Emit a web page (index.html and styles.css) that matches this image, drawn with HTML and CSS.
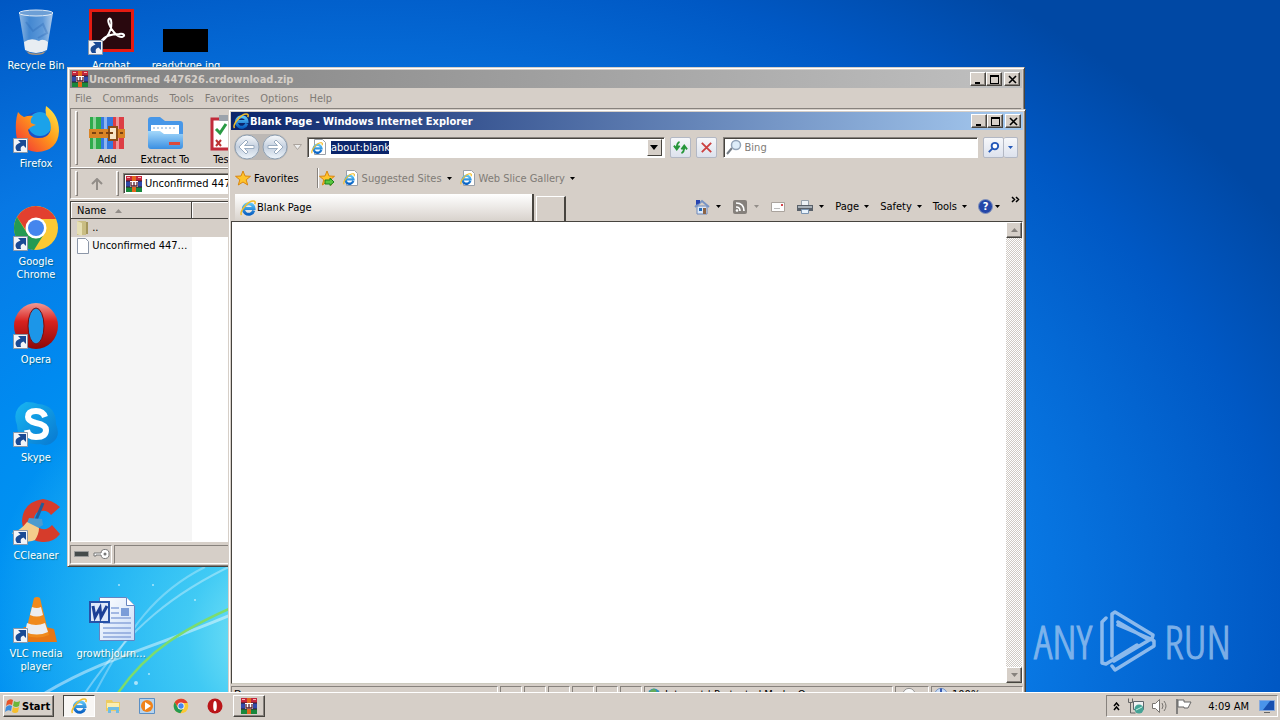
FILE: index.html
```html
<!DOCTYPE html>
<html lang="en">
<head>
<meta charset="utf-8">
<title>Desktop</title>
<link rel="stylesheet" href="styles.css">
</head>
<body>
<svg class="defs" aria-hidden="true">
  <linearGradient id="g-ie" x1="0" y1="0" x2="0" y2="1"><stop offset="0" stop-color="#5cc4f6"/><stop offset="1" stop-color="#0a62c4"/></linearGradient>
  <linearGradient id="g-glass" x1="0" y1="0" x2="1" y2="0"><stop offset="0" stop-color="#a8c8e8"/><stop offset=".3" stop-color="#4f8fd2"/><stop offset=".7" stop-color="#6fa4dc"/><stop offset="1" stop-color="#cfe0f2"/></linearGradient>
  <linearGradient id="g-opera" x1="0" y1="0" x2="0" y2="1"><stop offset="0" stop-color="#f39a94"/><stop offset=".4" stop-color="#d8221f"/><stop offset="1" stop-color="#8c0808"/></linearGradient>
  <linearGradient id="g-fox" x1="1" y1="0" x2="0" y2="1"><stop offset="0" stop-color="#fff04a"/><stop offset=".45" stop-color="#ff9a1a"/><stop offset="1" stop-color="#f0253c"/></linearGradient>
  <linearGradient id="g-nav" x1="0" y1="0" x2="0" y2="1"><stop offset="0" stop-color="#f8fafc"/><stop offset=".5" stop-color="#c4d0df"/><stop offset="1" stop-color="#eef5fb"/></linearGradient>
  <linearGradient id="g-skype" x1="0" y1="0" x2="1" y2="1"><stop offset="0" stop-color="#18b6f2"/><stop offset="1" stop-color="#0878d0"/></linearGradient>
  <linearGradient id="g-folder" x1="0" y1="0" x2="0" y2="1"><stop offset="0" stop-color="#a4d8fa"/><stop offset="1" stop-color="#3a8fe2"/></linearGradient>
  <linearGradient id="g-page" x1="0" y1="0" x2="1" y2="1"><stop offset="0" stop-color="#fff"/><stop offset="1" stop-color="#c8dcf8"/></linearGradient>
  <symbol id="link" viewBox="0 0 15 15"><path fill="#f2f4f8" stroke="#8c98a8" d="M.5.5h14v14H.5z"/><path fill="#1a4a94" d="M5 2h8v8l-2.500-2.500C8 8 7 10 8 13H4C1 9 3 6 7.500 4.500z"/></symbol>
  <symbol id="caret" viewBox="0 0 5 3"><path d="M0 0h5L2.500 3z"/></symbol>
  <symbol id="rar" viewBox="0 0 16 16"><path fill="#c4263c" d="M0 0h16v5H0z"/><path fill="#3048a8" d="M0 5h16v6H0z"/><path fill="#18883c" d="M0 11h16v5H0z"/><path stroke="#301828" d="M0 5h16M0 11h16"/><path fill="#e2681c" d="M6 0h4v16H6z"/><path fill="#fff" d="M4 5h8v6H4z"/><path fill="none" stroke="#5a2030" stroke-width="1.300" d="M5 6v4h6V6M8 6v4"/><path fill="#f6b4b4" d="M1 1h3v1H1zM12 1h3v1h-3z"/></symbol>
  <symbol id="ie" viewBox="0 0 16 16"><path fill="none" stroke="url(#g-ie)" stroke-width="3" d="M13.800 10.500A5.300 5.300 0 1 1 14 8.600H5"/><path fill="none" stroke="#f4bd28" stroke-width="1.500" d="M1.500 15C-.8 12 8-.2 14.500 1.200c1 .4.8 1.800.2 3"/></symbol>
  <symbol id="iepage" viewBox="0 0 16 16"><path fill="#fff" stroke="#9aa0a8" d="M3.500.5h8l3 3v12h-11z"/><svg y="3" width="12" height="12"><use href="#ie"/></svg></symbol>
  <symbol id="chrome" viewBox="0 0 48 48"><circle cx="24" cy="24" r="22" fill="#fbc934"/><path fill="#e2402f" d="M5 13a22 22 0 0 1 39 2H24a10 10 0 0 0-9.500 12z"/><path fill="#249a53" d="M5 13a22 22 0 0 0 17 33l10-16a10 10 0 0 1-17-1z"/><circle cx="24" cy="24" r="10.500" fill="#fff"/><circle cx="24" cy="24" r="8" fill="#4586ee"/></symbol>
  <symbol id="opera" viewBox="0 0 48 48"><ellipse cx="24" cy="24" rx="22" ry="23" fill="url(#g-opera)"/><ellipse cx="24" cy="24" rx="8" ry="18" fill="#1c96e8" stroke="#7a0d0d"/></symbol>
  <symbol id="star" viewBox="0 0 16 16"><path fill="#ffc42c" stroke="#d98610" d="m8 1 2 5 5.500.3-4.300 3.500 1.500 5.200L8 12l-4.700 3 1.500-5.200L.5 6.300 6 6z"/></symbol>
  <symbol id="min" viewBox="0 0 9 9"><path d="M1 7h5v2H1z"/></symbol>
  <symbol id="max" viewBox="0 0 9 9"><path d="M0 0h9v9H0zM1 2v6h7V2z" fill-rule="evenodd"/></symbol>
  <symbol id="close" viewBox="0 0 9 9"><path fill="none" stroke="#000" stroke-width="1.600" d="m1 1 7 7M8 1 1 8"/></symbol>
</svg>

<main class="desktop">
  <svg class="wallpaper" preserveAspectRatio="xMinYMax slice" viewBox="0 0 260 130" aria-hidden="true">
    <g fill="none" stroke="#fff">
      <path stroke-opacity=".45" stroke-width="3" d="M45 131C110 92 170 82 260 40"/>
      <path stroke-opacity=".35" stroke-width="2" d="M85 131C130 65 175 30 235 2"/>
      <path stroke-opacity=".3" stroke-width="2" d="M95 131C130 65 155 30 205 5"/>
      <path stroke="#7ddc6c" stroke-width="2.500" d="M118 131C145 92 180 65 260 34"/>
    </g>
    <g fill="#fff" fill-opacity=".6"><circle cx="119" cy="23" r="1"/><circle cx="153" cy="23" r="1"/><circle cx="136" cy="121" r="2"/><circle cx="149" cy="112" r="1"/><circle cx="195" cy="38" r="1"/></g>
  </svg>

  <nav class="icons" aria-label="Desktop icons">
    <a class="icon r1 c1" href="#bin"><svg viewBox="0 0 48 48"><path fill="url(#g-glass)" fill-opacity=".85" d="m7 5 6 36q11 7 22 0l6-36z"/><path fill="none" stroke="#2b66b4" stroke-opacity=".35" stroke-width="2" d="m14 14 7 9 10-7 4 9-9 5"/><path fill="#e8edf2" d="m12 34 1 8q11 6 22 0l1-8q-5-4-9-1-8-4-15 1z"/><path fill="#a8927a" d="M14 43q10 5 20 0l-3 3q-7 2-14 0z"/><ellipse cx="24" cy="5" rx="17" ry="3" fill="#6d9fd6" stroke="#dfeaf6"/></svg>Recycle Bin</a>
    <a class="icon r2 c1" href="#firefox"><svg viewBox="0 0 48 48"><circle cx="26" cy="24" r="18" fill="#1c50c4"/><circle cx="28" cy="18" r="12" fill="#1ba2ea"/><path fill="url(#g-fox)" d="M6 6q2 3 6 5 5-2 9-1-3 3-2 7l5 2q-5 1-8 5 2 9 11 8 8 0 11-6 3-9-4-17-1-5 0-9Q47 9 47 25q-1 20-22 21Q5 44 4 27 3 15 6 6z"/></svg><svg class="link"><use href="#link"/></svg>Firefox</a>
    <a class="icon r3 c1" href="#chrome"><svg><use href="#chrome"/></svg><svg class="link"><use href="#link"/></svg>Google Chrome</a>
    <a class="icon r4 c1" href="#opera"><svg><use href="#opera"/></svg><svg class="link"><use href="#link"/></svg>Opera</a>
    <a class="icon r5 c1" href="#skype"><svg viewBox="0 0 48 48"><path fill="url(#g-skype)" d="M14 2q8 0 12 2 18 1 18 20 5 12-3 18-5 5-13 2Q6 46 5 25-1 9 14 2z"/><path fill="none" stroke="#fff" stroke-width="6" d="M33 17q-2-6-9-6-8 0-8 6 0 4 8 6 10 2 10 7 0 7-10 7-8 0-9-7"/></svg><svg class="link"><use href="#link"/></svg>Skype</a>
    <a class="icon r6 c1" href="#ccleaner"><svg viewBox="0 0 48 48"><path fill="#d63c2b" d="M48 9Q40 2 31 1 11 4 10 23q1 19 20 21 11 1 18-8l-8-9q-4 5-10 4-9-2-8-10 1-8 8-8 5-1 9 4z"/><path stroke="#255c96" stroke-width="3" d="M31 5 24 22"/><path fill="#4b9bd0" d="m17 20 13 1 1 6-5 3-11-5z"/><path fill="#f4cd8c" d="M15 24Q9 32 0 35l8 9q10 0 15-2 4-6 4-12z"/></svg><svg class="link"><use href="#link"/></svg>CCleaner</a>
    <a class="icon r7 c1" href="#vlc"><svg viewBox="0 0 48 48"><path fill="#e77714" d="M12 31 4 44l3 2h38l-3-13-8-2z"/><path fill="#f08a1c" d="m22 2-9 37q12 5 24 0L28 2q-3-2-6 0z"/><path fill="#ecedf0" d="m20 11-2 8q7 3 13 0l-2-8q-4 2-9 0zM15 27l-2 9q12 5 23 0l-3-9q-9 4-18 0z"/></svg><svg class="link"><use href="#link"/></svg>VLC media player</a>
    <a class="icon r1 c2" href="#acrobat"><svg viewBox="0 0 48 48"><path fill="#e51b12" d="M2 1h45v43H2z"/><path fill="#29080e" d="M5 4h39v37H5z"/><path fill="none" stroke="#fff" stroke-width="2" d="M12 34c8-2 14-13 12-22-1-3-4-1-2 4 2 6 8 13 13 13 4-1 2-4-3-3-8 0-15 3-18 7"/></svg><svg class="link"><use href="#link"/></svg>Acrobat</a>
    <a class="icon r7 c2" href="#growth"><svg viewBox="0 0 48 48"><path fill="url(#g-page)" stroke="#6684c0" d="M12.500 1.500h27l8 8v35h-35z"/><path fill="#fff" stroke="#6684c0" d="M39.500 1.500v8h8"/><path stroke="#8ba5da" stroke-width="1.500" d="M24 12h8M24 17h8M24 22h20M16 27h28M16 32h28M16 37h28M16 41h28"/><path fill="#7b9dd8" d="M34 12h8v8h-8z"/><path fill="#dfe8fa" stroke="#2752a8" stroke-width="2" d="M3 6h19v20H3z"/><path fill="none" stroke="#1c3f96" stroke-width="3" d="m6 10 2 11 5-9 1 9 6-11"/></svg>growthjourn...</a>
    <a class="icon r1 c3" href="#ready"><svg viewBox="0 0 48 48"><path d="M1 21h45v23H1z"/></svg>readytype.jpg</a>
  </nav>

  <section class="window rar-window" aria-label="WinRAR">
    <header class="title inactive"><svg class="i16"><use href="#rar"/></svg><h1>Unconfirmed 447626.crdownload.zip</h1>
      <div class="controls"><button aria-label="Minimize"><svg><use href="#min"/></svg></button><button aria-label="Maximize"><svg><use href="#max"/></svg></button><button aria-label="Close"><svg><use href="#close"/></svg></button></div></header>
    <nav class="menu"><button>File</button><button>Commands</button><button>Tools</button><button>Favorites</button><button>Options</button><button>Help</button></nav>
    <div class="rar-tools">
      <i class="grip"></i>
      <button><svg viewBox="0 0 36 36"><path fill="#2fab4b" d="M1 2h11v32H1z"/><path fill="#3479e0" d="M12 2h12v32H12z"/><path fill="#dd3e45" d="M24 2h11v32H24z"/><path fill="#fff" fill-opacity=".45" d="M4 2h3v32H4zM15 2h3v32h-3zM27 2h3v32h-3z"/><path fill="#d98425" d="M0 14h36v9H0z"/><path fill="#f8e6c8" stroke="#8c4e16" stroke-width="2" d="M20 12h8v13h-8z"/><path stroke="#7a4212" stroke-width="2" d="M3 18h4M10 18h4M17 18h7M31 18h3"/></svg>Add</button>
      <button><svg viewBox="0 0 36 36"><path fill="#4797e8" d="M1 5q0-3 3-3h9l5 4h15q3 0 3 3v12H1z"/><path fill="#fff" d="M4 10h28v12H4z"/><path stroke="#7aa8d8" stroke-dasharray="2" d="M6 13h24"/><path fill="url(#g-folder)" d="M1 16h12l4 3h19v12q0 3-3 3H4q-3 0-3-3z"/><path fill="#db493c" d="M22 27h11v3H22z"/></svg>Extract To</button>
      <button><svg viewBox="0 0 36 36"><path fill="#fff" stroke="#c12b3a" stroke-width="3" d="M7 4h28v30H7z"/><path fill="#9ba3ac" d="M14 0h12v6H14z"/><path fill="none" stroke="#2a9a44" stroke-width="3" d="m11 14 4 4 6-9"/><path stroke="#b33" stroke-width="2" d="m11 25 5 6m0-6-5 6"/></svg>Test</button>
    </div>
    <div class="rar-path">
      <i class="grip"></i><button class="up" aria-label="Up"><svg viewBox="0 0 12 12"><path fill="none" stroke="#928d88" stroke-width="2" d="M6 12V2M1 6l5-5 5 5"/></svg></button><i class="grip"></i>
      <label class="field"><svg class="i16"><use href="#rar"/></svg><input aria-label="Path" value="Unconfirmed 447626.crdownload.zip"></label>
    </div>
    <div class="files">
      <table><thead><tr><th>Name <svg class="sort" viewBox="0 0 7 4"><path fill="#928d88" d="M0 4h7L3.500 0z"/></svg></th><th></th></tr></thead>
      <tbody><tr class="picked"><td><svg class="i16" viewBox="0 0 16 16"><path fill="#c9bd83" d="M2 1h9v14H2z"/><path fill="#e6dfb4" d="m2 1 5 2v13l-5-2z"/><path fill="#a4965c" d="M11 2h2v12h-2z"/></svg> ..</td><td></td></tr>
      <tr><td><svg class="i16" viewBox="0 0 16 16"><path fill="#fff" stroke="#8c97a8" d="M2.500.5h8l3 3v12h-11z"/></svg> Unconfirmed 447…</td><td></td></tr></tbody></table>
    </div>
    <footer class="rar-status"><span class="keys"><svg viewBox="0 0 36 12"><path fill="#454b4b" stroke="#999" d="M.5 3.500h14v5H.5z"/><path fill="#fff" stroke="#777" d="M35 6a4 4 0 1 0-8-1h-7v3h2V7h5a4 4 0 0 0 8-1z"/><circle cx="31" cy="6" r="1.500" fill="#777"/></svg></span><span class="grow"></span></footer>
  </section>

  <section class="window ie-window" aria-label="Internet Explorer">
    <header class="title"><svg class="i16"><use href="#ie"/></svg><h1>Blank Page - Windows Internet Explorer</h1>
      <div class="controls"><button aria-label="Minimize"><svg><use href="#min"/></svg></button><button aria-label="Maximize"><svg><use href="#max"/></svg></button><button aria-label="Close"><svg><use href="#close"/></svg></button></div></header>
    <div class="nav">
      <div class="travel">
        <button aria-label="Back"><svg viewBox="0 0 26 26"><circle cx="13" cy="13" r="12" fill="url(#g-nav)" stroke="#8fa0b2"/><path fill="#fff" stroke="#9aacc0" d="m5 13 7-7 2 2-3.500 3.500H20v3h-9.500L14 18l-2 2z"/></svg></button>
        <button aria-label="Forward"><svg viewBox="0 0 26 26"><circle cx="13" cy="13" r="12" fill="url(#g-nav)" stroke="#8fa0b2"/><path fill="#fff" stroke="#9aacc0" d="m21 13-7-7-2 2 3.500 3.500H6v3h9.500L12 18l2 2z"/></svg></button>
      </div>
      <button class="recent" aria-label="Recent pages"><svg viewBox="0 0 9 6"><path fill="#eee" stroke="#aaa39d" d="M.5.500h8l-4 5z"/></svg></button>
      <div class="field address"><svg class="i16"><use href="#iepage"/></svg><input aria-label="Address" value="about:blank"><button class="drop" aria-label="Show addresses"><svg class="caret big"><use href="#caret"/></svg></button></div>
      <button class="soft" aria-label="Refresh"><svg viewBox="0 0 16 16"><path fill="none" stroke="#26963a" stroke-width="2" d="M7 2Q4 3 4 9M1 6l3 4 3-4M9 14q3-1 3-7M9 10l3-4 3 4"/></svg></button>
      <button class="soft" aria-label="Stop"><svg viewBox="0 0 16 16"><path stroke="#cc4140" stroke-width="2" d="m3 3 10 10M13 3 3 13"/></svg></button>
      <label class="field search"><svg class="i16" viewBox="0 0 16 16"><path stroke="#777f88" stroke-width="2" d="m1 15 5-6"/><circle cx="10" cy="6" r="4.500" fill="#deedf9" stroke="#93a4b8" stroke-width="1.500"/></svg><input aria-label="Search" placeholder="Bing"></label>
      <div class="split"><button class="soft" aria-label="Search"><svg viewBox="0 0 16 16"><path stroke="#2458b8" stroke-width="2" d="m3 13 4-4"/><circle cx="9.500" cy="6.500" r="3.500" fill="#fff" stroke="#2458b8" stroke-width="2"/></svg></button><button class="soft slim" aria-label="Search options"><svg class="caret blue"><use href="#caret"/></svg></button></div>
    </div>
    <div class="favs">
      <button class="dark"><svg class="i16"><use href="#star"/></svg>Favorites</button><i class="rule"></i>
      <button aria-label="Add to favorites"><svg class="i16" viewBox="0 0 16 16"><use href="#star" width="16" height="16"/><path fill="#58c640" stroke="#1e801c" d="M6 10h5V8l4 4-4 3.500V14H6z"/></svg></button>
      <button class="site"><svg class="i16"><use href="#iepage"/></svg>Suggested Sites<svg class="caret"><use href="#caret"/></svg></button>
      <button class="site"><svg class="i16"><use href="#iepage"/></svg>Web Slice Gallery<svg class="caret"><use href="#caret"/></svg></button>
    </div>
    <div class="tabs">
      <button class="tab"><svg class="i16"><use href="#ie"/></svg>Blank Page</button><button class="newtab" aria-label="New tab"></button>
      <div class="commands">
        <button aria-label="Home"><svg class="i16" viewBox="0 0 16 16"><path fill="#dce8f8" stroke="#6e88b8" d="M3 7h10v8H3z"/><path fill="none" stroke="#7894c4" stroke-width="2" d="m1 8 7-6 7 6"/><path fill="#2744b0" d="M2 1h4v3L2 6z"/><path fill="#276db8" d="M5 9h3v3H5z"/><path fill="#8d6445" d="M9 9h3v6H9z"/></svg><svg class="caret"><use href="#caret"/></svg></button>
        <button aria-label="Feeds"><svg class="i16" viewBox="0 0 16 16"><rect x="1" y="1" width="14" height="14" rx="2" fill="#85807b"/><path fill="none" stroke="#fff" stroke-width="1.700" d="M4 4q8 0 8 8M4 8q4 0 4 4"/><circle cx="5" cy="11.500" r="1.300" fill="#fff"/></svg><svg class="caret faint"><use href="#caret"/></svg></button>
        <button aria-label="Mail"><svg class="i16" viewBox="0 0 16 16"><path fill="#fdfdfd" stroke="#aaa39d" d="M1.500 3.500h13v9h-13z"/><path fill="#d3454c" d="M11 5h2v2h-2z"/><path stroke="#bbb" d="M4 9.500h6"/></svg></button>
        <button aria-label="Print"><svg class="i16" viewBox="0 0 16 16"><path fill="#eef2f6" stroke="#98a2ac" d="M4.500 1.500h7v5h-7z"/><path fill="#596069" d="M0 6h16v6H0z"/><path fill="#a9b1b8" d="M1 7h14v2H1z"/><path fill="#e7f2fc" stroke="#7b94b0" d="M4.500 10.500h7v4h-7z"/></svg><svg class="caret"><use href="#caret"/></svg></button>
        <button>Page<svg class="caret"><use href="#caret"/></svg></button><button>Safety<svg class="caret"><use href="#caret"/></svg></button><button>Tools<svg class="caret"><use href="#caret"/></svg></button>
        <button class="help"><span>?</span><svg class="caret"><use href="#caret"/></svg></button>
        <button class="more" aria-label="More"><svg viewBox="0 0 9 7"><path fill="none" stroke="#000" stroke-width="1.500" d="m1 1 2.500 2.500L1 6M5 1l2.500 2.500L5 6"/></svg></button>
      </div>
    </div>
    <div class="view"><div class="page"></div><div class="scroll"><button aria-label="Scroll up"><svg viewBox="0 0 7 4"><path d="M0 4h7L3.500 0z"/></svg></button><button aria-label="Scroll down"><svg viewBox="0 0 7 4"><path d="M0 0h7L3.500 4z"/></svg></button></div></div>
    <footer class="ie-status"><span class="grow">Done</span><span class="cell"></span><span class="cell"></span><span class="cell"></span><span class="cell"></span><span class="cell"></span><span class="cell"></span><span class="zone"><svg viewBox="0 0 16 16"><circle cx="8" cy="8" r="7" fill="#2f91bf"/><path fill="#65ab5a" d="m3 4 5-3 3 3-3 5-4-1z"/></svg>Internet | Protected Mode: On</span><span class="lock"><svg viewBox="0 0 16 16"><circle cx="8" cy="8" r="7" fill="#fafafa" stroke="#888"/></svg></span><span class="zoom"><svg viewBox="0 0 16 16"><circle cx="8" cy="8" r="7" fill="#c9dcf6" stroke="#6c8bc0"/><path stroke="#2449a8" stroke-width="2" d="M8 1v12"/></svg>100%</span></footer>
  </section>

  <div class="watermark"><span>ANY</span><svg viewBox="0 0 56 62" aria-hidden="true"><path fill="none" stroke="#b8d4f4" stroke-width="3.500" stroke-linejoin="round" stroke-linecap="round" d="M6 8 2 12v41l4 1 31-19M12 46V4l3-2 38 23-1 4-3 1-31-18M12 56l3 4 39-24v-5l-3-2-37 22M18 15l33 14"/></svg><span>RUN</span></div>
</main>

<footer class="taskbar">
  <button class="start"><svg class="i16" viewBox="0 0 16 16"><path fill="#e6542a" d="M2 3q3-3 6-1L7 7Q4 5 1 8z"/><path fill="#6cb63a" d="M9 3q3 2 6 0l-1 5q-3 2-6 0z"/><path fill="#3b8dde" d="M1 9q3-3 6-1l-1 5q-3-2-6 1z"/><path fill="#f6be2c" d="M8 9q3 2 6 0l-1 5q-3 2-6 0z"/></svg>Start</button>
  <nav class="quick" aria-label="Applications">
    <button class="on" aria-label="Internet Explorer"><svg><use href="#ie"/></svg></button>
    <button aria-label="Explorer"><svg viewBox="0 0 16 16"><path fill="#edcc62" d="M1 2h6l1 2h7v9H1z"/><path fill="#fbeeb0" d="M2 5h12v5H2z"/><path fill="#70bde4" d="M3 9h11v6h-3v-3H6v3H3z"/></svg></button>
    <button aria-label="Media Player"><svg viewBox="0 0 16 16"><path fill="#b7d4ee" stroke="#5b8fc4" d="M.5.500h15v15H.5z"/><circle cx="8" cy="8" r="6" fill="#f0831a"/><path fill="#fff" d="m6 4 6 4-6 4z"/></svg></button>
    <button aria-label="Chrome"><svg><use href="#chrome"/></svg></button>
    <button aria-label="Opera"><svg viewBox="0 0 16 16"><circle cx="8" cy="8" r="7.500" fill="#ba1518"/><ellipse cx="8" cy="8" rx="1.800" ry="5" fill="#fff"/></svg></button>
    <button class="raised" aria-label="WinRAR"><svg><use href="#rar"/></svg></button>
  </nav>
  <div class="tray">
    <button class="chev" aria-label="Show hidden icons"><svg viewBox="0 0 7 9"><path fill="none" stroke="#000" stroke-width="1.500" d="m1 4 2.500-3L6 4M1 8l2.500-3L6 8"/></svg></button>
    <svg class="i16" viewBox="0 0 16 16"><path fill="#f0f2f4" stroke="#60666c" d="M5.500 3.500h10v8h-10z"/><path fill="none" stroke="#666" d="M.5.500v4h4v-4M2.500 5v10h5"/><circle cx="11" cy="11" r="4.500" fill="#45a396"/><path stroke="#c8f0e4" d="m8 12 6-3"/></svg>
    <svg class="i16" viewBox="0 0 16 16"><path fill="#fff" stroke="#77736f" d="M.5 5.500h3l4-4v13l-4-4h-3z"/><path fill="none" stroke="#77736f" d="M10 5q2 3 0 6M12 3q4 5 0 10"/></svg>
    <svg class="i16" viewBox="0 0 16 16"><path stroke="#666" stroke-width="1.500" d="M1 1v15"/><path fill="#fff" stroke="#666" d="M2 2h6v2h7l-3 6H8V9H2z"/></svg>
    <time>4:09 AM</time>
    <button class="show" aria-label="Show desktop"><svg viewBox="0 0 16 16"><path fill="#1750b0" stroke="#88aadd" d="M.5 2.500h15v10H.5z"/><path fill="#4a94ea" d="M1 3h10L4 12H1z"/><path fill="#666" d="M5 14h6v1H5z"/></svg></button>
  </div>
</footer>
</body>
</html>
```
FILE: styles.css
```css
:root { --face: #d6cfc8; --hi: #fff; --shade: #87827d; --dark: #47443f; }
* { box-sizing: border-box; }
body { margin: 0; height: 100vh; display: flex; flex-direction: column; overflow: hidden; font: 11px/13px "DejaVu Sans Condensed", "DejaVu Sans", sans-serif; color: #000; }
button, input { font: inherit; color: inherit; padding: 0; border: 0; background: none; border-radius: 0; outline: 0; }
button { display: flex; align-items: center; white-space: nowrap; }
svg { display: block; flex: none; }
.defs { position: absolute; width: 0; height: 0; }
.i16 { width: 16px; height: 16px; }
.caret { width: 5px; height: 3px; margin-left: 5px; }
.caret.big { width: 8px; height: 5px; margin: 0; }
.caret.blue { fill: #2458b8; margin: 0; }
.caret.faint { fill: #928d88; }
.grow { flex: 1; }

.desktop { flex: 1; min-height: 0; position: relative; overflow: hidden; background: radial-gradient(circle at 22% 92%, #8ceaf4 0, #50d4f4cc 8%, #18b8f800 25%), radial-gradient(ellipse 84% 110% at 28% 88%, #08b0f8 0, #009cf4 22%, #008af0 42%, #0878e4 62%, #0058c4 86%, #0048a4 100%); }
.wallpaper { position: absolute; left: 0; bottom: 0; width: 260px; height: 130px; }

.icons { position: relative; display: grid; grid-template-columns: repeat(3, 72px); column-gap: 3px; grid-template-rows: repeat(7, 98px); padding-top: 8px; }
.icon { position: relative; display: flex; flex-direction: column; align-items: center; text-align: center; color: #fff; text-decoration: none; text-shadow: 1px 1px 1px #0548; }
.icon svg { width: 48px; height: 48px; margin-bottom: 3px; }
.icon svg.link { position: absolute; left: 13px; top: 32px; width: 15px; height: 15px; }
.r1 { grid-row: 1; } .r2 { grid-row: 2; } .r3 { grid-row: 3; } .r4 { grid-row: 4; } .r5 { grid-row: 5; } .r6 { grid-row: 6; } .r7 { grid-row: 7; }
.c1 { grid-column: 1; } .c2 { grid-column: 2; } .c3 { grid-column: 3; }

.window { position: absolute; display: flex; flex-direction: column; padding: 2px; background: var(--face); border: 1px solid; border-color: var(--face) var(--dark) var(--dark) var(--face); box-shadow: inset 1px 1px var(--hi), inset -1px -1px var(--shade); }
.rar-window { left: 67px; top: 67px; width: 958px; height: 500px; }
.ie-window { left: 228px; top: 109px; width: 798px; height: 597px; }
.title { display: flex; align-items: center; gap: 1px; height: 18px; padding: 0 2px; color: #fff; background: linear-gradient(90deg, #0a246a, #a6caf0); }
.title.inactive { color: #d6cfc8; background: linear-gradient(90deg, #808080, #c0c0c0); }
.title h1 { flex: 1; margin: 0; font-size: 11px; line-height: 13px; font-weight: bold; }
.controls { display: flex; }
.controls button { width: 16px; height: 14px; justify-content: center; background: var(--face); border: 1px solid; border-color: var(--hi) var(--dark) var(--dark) var(--hi); box-shadow: inset -1px -1px var(--shade); }
.controls button:last-child { margin-left: 2px; }
.controls svg { width: 9px; height: 9px; }

.menu { display: flex; gap: 11px; height: 20px; padding-left: 5px; color: #807b76; }
.grip { width: 3px; align-self: stretch; border: 1px solid; border-color: var(--hi) var(--shade) var(--shade) var(--hi); }
.rar-tools, .rar-path { display: flex; border: 1px solid; border-color: var(--shade) var(--hi) var(--hi) var(--shade); padding: 2px 4px; }
.rar-tools { height: 60px; }
.rar-tools button { flex-direction: column; width: 58px; gap: 2px; padding-top: 4px; }
.rar-tools svg { width: 36px; height: 36px; }
.rar-path { height: 31px; align-items: center; }
.up { width: 38px; justify-content: center; }
.up svg { width: 12px; height: 12px; }
.field { display: flex; align-items: center; gap: 3px; background: #fff; border: 1px solid; border-color: var(--shade) var(--hi) var(--hi) var(--shade); box-shadow: inset 1px 1px var(--dark); padding: 2px; }
.rar-path .field { flex: 1; height: 21px; margin-left: 4px; }
.field input { flex: 1; min-width: 0; }
.files { flex: 1; margin-top: 2px; border: 1px solid; border-color: var(--dark) var(--hi) var(--hi) var(--dark); background: linear-gradient(90deg, #f5f5f5 121px, #fff 121px); }
.files table { width: 100%; table-layout: fixed; border-collapse: separate; border-spacing: 0; }
.files th { height: 17px; padding: 0 6px; text-align: left; font-weight: normal; background: var(--face); border-right: 1px solid var(--dark); border-bottom: 1px solid var(--dark); box-shadow: inset 1px 1px var(--hi); }
.files th:first-child { width: 121px; }
.sort { display: inline-block; width: 7px; height: 4px; margin-left: 6px; vertical-align: middle; }
.files td { height: 18px; padding: 0 0 0 4px; white-space: nowrap; }
.files td svg { display: inline-block; vertical-align: middle; margin-right: -2px; }
.files .picked { background: var(--face); }
.rar-status { display: flex; gap: 2px; height: 22px; padding-top: 3px; }
.rar-status span { border: 1px solid; border-color: var(--shade) var(--hi) var(--hi) var(--shade); }
.rar-status .keys { width: 42px; padding: 2px 3px; }
.rar-status svg { width: 36px; height: 12px; }

.nav { display: flex; align-items: center; height: 34px; padding: 0 5px 0 3px; }
.travel { display: flex; gap: 2px; border-radius: 13px; background: #bcb8b5; }
.travel svg { width: 26px; height: 26px; }
.recent { width: 19px; justify-content: center; }
.recent svg { width: 9px; height: 6px; }
.nav .field { height: 21px; }
.address { flex: 357; padding: 2px 2px 2px 3px; }
.nav .address input { flex: none; width: 58px; height: 13px; color: #fff; background: #0a246a; margin-left: 1px; }
.drop { width: 15px; height: 17px; margin-left: auto; justify-content: center; background: var(--face); border: 1px solid; border-color: var(--hi) var(--dark) var(--dark) var(--hi); }
.search { flex: 254; margin-left: 6px; }
.search input::placeholder { color: #807b76; opacity: 1; }
.soft { width: 21px; height: 21px; margin-left: 5px; justify-content: center; border: 1px solid #b3b8c4; border-radius: 2px; background: linear-gradient(#f6f7fa, #dde2ed); }
.soft svg:not(.caret) { width: 15px; height: 15px; }
.split { display: flex; }
.split .slim { width: 14px; margin-left: 0; border-left: 0; }
.favs { display: flex; align-items: center; height: 28px; padding-left: 4px; color: #807b76; }
.favs button { gap: 3px; }
.favs .dark { color: #000; }
.rule { width: 2px; height: 20px; margin: 0 0 0 18px; border-left: 1px solid var(--shade); border-right: 1px solid var(--hi); }
.site { margin-left: 8px; }
.site .caret { margin-left: 2px; }
.tabs { display: flex; align-items: flex-end; height: 29px; padding-left: 4px; }
.tab { flex: 0 1 299px; height: 27px; padding-left: 5px; gap: 1px; border-right: 2px solid var(--dark); background: linear-gradient(#fff, #d8d2cc); }
.newtab { width: 30px; height: 25px; margin-left: 2px; border: 1px solid var(--hi); border-right: 2px solid var(--dark); border-bottom: 0; }
.commands { display: flex; align-items: center; gap: 11px; height: 29px; margin-left: auto; padding-right: 3px; }
.commands .i16 + .caret { margin-left: 6px; }
.help span { width: 15px; height: 15px; border-radius: 50%; background: #2446a8; border: 1px solid #8494bc; color: #fff; font-weight: bold; }
.help .caret { margin-left: 2px; }
.more { align-self: flex-start; }
.more svg { width: 9px; height: 7px; margin-top: 4px; }
.view { flex: 1; display: flex; background: #fff; border: 1px solid; border-color: var(--dark) var(--hi) #cbc9bd var(--dark); }
.page { flex: 1; }
.scroll { width: 16px; display: flex; flex-direction: column; justify-content: space-between; background: repeating-conic-gradient(#d0cac4 0 25%, #fff 0 50%) 0 0 / 2px 2px; }
.scroll button { width: 16px; height: 16px; justify-content: center; background: var(--face); border: 1px solid; border-color: var(--hi) var(--dark) var(--dark) var(--hi); box-shadow: inset -1px -1px var(--shade); }
.scroll svg { width: 7px; height: 4px; fill: #87827d; }
.ie-status { display: flex; gap: 2px; height: 19px; padding-top: 2px; }
.ie-status span { display: flex; align-items: center; gap: 4px; padding-left: 2px; border: 1px solid; border-color: var(--shade) var(--hi) var(--hi) var(--shade); }
.ie-status svg { width: 14px; height: 15px; }
.ie-status .cell { width: 22px; }
.ie-status .zone { width: 249px; }
.ie-status .lock { width: 34px; padding-left: 6px; }
.ie-status .zoom { width: 92px; }

.watermark { position: absolute; right: 49px; bottom: 20px; display: flex; align-items: center; gap: 8px; color: #a4c8f0; font: 300 46px/62px "Open Sans Condensed Light", "Open Sans Condensed", "Liberation Sans Narrow", sans-serif; -webkit-text-stroke: 1px #a4c8f0; opacity: .75; }
.watermark svg { width: 56px; height: 62px; }

.taskbar { display: flex; align-items: center; height: 28px; padding: 2px; background: var(--face); box-shadow: inset 0 1px var(--hi); }
.start { height: 22px; width: 51px; margin-left: 1px; gap: 1px; font-weight: bold; padding-left: 1px; }
.start, .quick .raised { border: 1px solid; border-color: var(--hi) var(--dark) var(--dark) var(--hi); box-shadow: inset -1px -1px var(--shade); }
.quick { display: flex; align-items: center; gap: 2px; margin-left: 9px; }
.quick button { width: 32px; height: 22px; justify-content: center; }
.quick svg { width: 16px; height: 16px; }
.quick .on { border: 1px solid; border-color: var(--dark) var(--hi) var(--hi) var(--dark); background: #f8f6f4; }
.tray { display: flex; align-items: center; gap: 8px; height: 22px; margin-left: auto; padding: 0 2px 0 6px; border: 1px solid; border-color: var(--shade) var(--hi) var(--hi) var(--shade); }
.chev svg { width: 7px; height: 9px; }
.tray time { margin: 0 2px 0 8px; }
.show svg { width: 16px; height: 16px; }
```
